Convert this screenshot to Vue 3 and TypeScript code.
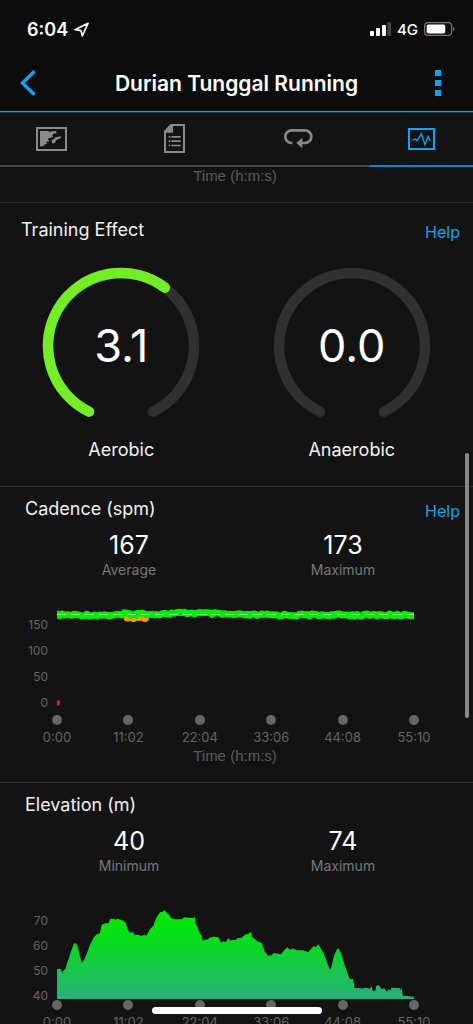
<script setup lang="ts">
interface Gauge {
  label: string
  value: number
}

interface Stat {
  value: number
  label: string
}

type Point = [number, number]

const GAUGE_MAX = 5
const GAUGE_SWEEP = 308
const gauges: Gauge[] = [
  { label: 'Aerobic', value: 3.1 },
  { label: 'Anaerobic', value: 0 },
]

const times: string[] = ['0:00', '11:02', '22:04', '33:06', '44:08', '55:10']

const cadenceStats: Stat[] = [
  { value: 167, label: 'Average' },
  { value: 173, label: 'Maximum' },
]
const elevationStats: Stat[] = [
  { value: 40, label: 'Minimum' },
  { value: 74, label: 'Maximum' },
]
const cadenceAxis: number[] = [150, 100, 50, 0]
const elevationAxis: number[] = [70, 60, 50, 40]

function arc(fraction: number): string {
  const r = 73
  const start = (360 - GAUGE_SWEEP) / 2
  const at = (deg: number): string => {
    const a = (deg * Math.PI) / 180
    return `${(79 - r * Math.sin(a)).toFixed(2)} ${(79 + r * Math.cos(a)).toFixed(2)}`
  }
  const sweep = GAUGE_SWEEP * fraction
  return `M${at(start)} A${r} ${r} 0 ${sweep > 180 ? 1 : 0} 1 ${at(start + sweep)}`
}

function noise(i: number): number {
  const v = Math.sin(i * 12.9898) * 43758.5453
  return (v - Math.floor(v)) * 2 - 1
}

const cadencePoints: Point[] = Array.from({ length: 144 }, (_, i): Point => {
  const x = i * 2.5
  const rise = 2 * Math.exp(-(((x - 132) / 34) ** 2))
  const dip = x > 66 && x < 94 ? 1 : 0
  return [x, 20 - rise + dip + 1.2 * noise(i)]
})

const elevationProfile: Point[] = [
  [171, 567], [182, 567], [187, 578], [191, 571], [196, 568], [200, 552], [207, 535], [212, 517],
  [221, 492], [227, 489], [233, 500], [240, 530], [246, 548], [252, 540], [260, 522], [270, 494],
  [282, 472], [291, 462], [300, 460], [305, 434], [316, 430], [326, 430], [330, 417], [342, 416],
  [347, 420], [350, 416], [358, 418], [366, 421], [376, 426], [383, 448], [390, 458], [400, 457],
  [404, 466], [415, 464], [424, 468], [433, 464], [440, 467], [448, 450], [460, 437], [468, 415],
  [480, 397], [488, 395], [494, 391], [500, 398], [507, 404], [514, 415], [524, 418], [545, 418],
  [553, 412], [565, 413], [582, 414], [584, 408], [586, 428], [593, 443], [600, 462], [605, 466],
  [609, 484], [616, 478], [621, 480], [628, 473], [640, 470], [655, 472], [664, 488], [670, 484],
  [678, 486], [685, 474], [692, 482], [700, 479], [707, 480], [713, 474], [724, 474], [735, 464],
  [744, 462], [754, 455], [756, 470], [765, 478], [774, 485], [785, 488], [794, 514], [804, 527],
  [814, 526], [821, 519], [844, 523], [851, 512], [862, 502], [871, 510], [879, 505], [889, 511],
  [909, 511], [924, 517], [936, 503], [942, 499], [947, 502], [955, 493], [964, 508], [972, 522],
  [982, 549], [990, 569], [994, 563], [1001, 530], [1011, 508], [1016, 505], [1023, 520],
  [1034, 555], [1048, 595], [1053, 598], [1059, 596], [1064, 625], [1079, 623], [1084, 626],
  [1099, 623], [1109, 626], [1115, 619], [1118, 632], [1126, 632], [1129, 617], [1137, 615],
  [1144, 627], [1154, 625], [1159, 635], [1167, 628], [1171, 632], [1174, 623], [1199, 624],
  [1202, 630], [1204, 621], [1209, 648], [1219, 647], [1236, 650], [1239, 648], [1242, 655],
]
const elevationPath = `M171 657 ${elevationProfile.map(([x, y]) => `L${x} ${y}`).join(' ')} L1242 657 Z`
</script>

<template>
  <div class="screen">
    <div class="status">
      <div class="status-left">
        <span class="clock">6:04</span>
        <svg class="locate" viewBox="0 0 45 45" aria-hidden="true">
          <path d="M42 4 3 23 21 26 25 42Z" fill="none" stroke="#fff" stroke-width="5" stroke-linejoin="round" />
        </svg>
      </div>
      <div class="status-right">
        <svg class="signal" viewBox="0 0 21 14" aria-hidden="true">
          <rect x="0" y="9" width="4" height="5" rx="1" fill="#fff" />
          <rect x="6" y="6" width="4" height="8" rx="1" fill="#fff" />
          <rect x="12" y="3" width="4" height="11" rx="1" fill="#fff" />
          <rect x="17.5" y="0" width="3.5" height="14" rx="1" fill="#444" />
        </svg>
        <span class="network">4G</span>
        <svg class="battery" viewBox="0 0 31 14" aria-hidden="true">
          <rect x="0.6" y="0.6" width="27" height="12.8" rx="3.5" fill="none" stroke="#777" stroke-width="1.2" />
          <rect x="2.6" y="2.4" width="18.6" height="9.2" rx="1.8" fill="#fff" />
          <path d="M29 4.8Q30.6 5.5 30.6 7T29 9.2Z" fill="#777" />
        </svg>
      </div>
    </div>

    <header class="header">
      <button class="icon-button" type="button" aria-label="Back">
        <svg class="back" viewBox="0 0 16 26"><path d="M14.5 1.2 2.4 13 14.5 24.8" fill="none" stroke="#11a4ec" stroke-width="3.4" /></svg>
      </button>
      <h1>Durian Tunggal Running</h1>
      <button class="icon-button end" type="button" aria-label="More">
        <svg class="more" viewBox="0 0 6 26"><path d="M0 0H6V6H0ZM0 10H6V16H0ZM0 20H6V26H0Z" fill="#11a4ec" /></svg>
      </button>
    </header>

    <nav class="tabs">
      <button class="tab" type="button" aria-label="Map">
        <svg class="icon-map" viewBox="0 0 93 72">
          <rect x="3" y="3" width="87" height="66" fill="none" stroke="#8a8a8a" stroke-width="6" />
          <path d="M12 12H36L40 15 48 13 60 12 62 19 52 20 49 25 52 29 44 32 38 33 36 38 41 43 30 45 34 51 26 52 22 58H12ZM48 47 47 40 54 37 58 31 66 29 74 28 75 33 66 37 60 40 58 46 52 50Z" fill="#8a8a8a" />
        </svg>
      </button>
      <button class="tab" type="button" aria-label="Summary">
        <svg class="icon-doc" viewBox="0 0 63 87">
          <path d="M3 22 21 3H60V84H3Z" fill="none" stroke="#8a8a8a" stroke-width="6" />
          <path d="M2 23 22 2H27V26H2Z" fill="#8a8a8a" />
          <path d="M14 36h5v5h-5zM22 36h28v5H22zM14 49h5v5h-5zM22 49h28v5H22zM14 62h5v5h-5zM22 62h28v5H22z" fill="#8a8a8a" />
        </svg>
      </button>
      <button class="tab" type="button" aria-label="Laps">
        <svg class="icon-laps" viewBox="0 0 87 60">
          <path d="M25 42H23A19 19 0 0 1 23 4H63A19 19 0 0 1 63 42H50" fill="none" stroke="#8a8a8a" stroke-width="8" />
          <path d="M37 42 55 26V58Z" fill="#8a8a8a" />
        </svg>
      </button>
      <button class="tab active" type="button" aria-label="Charts">
        <svg class="icon-chart" viewBox="0 0 81 66">
          <rect x="3" y="3" width="75" height="60" fill="none" stroke="#11a4ec" stroke-width="6" />
          <path d="M13 37 21 33 28 38 40 17 51 50 60 25 67 39" fill="none" stroke="#11a4ec" stroke-width="4" />
        </svg>
      </button>
    </nav>

    <main class="content">
      <p class="axis-title first">Time (h:m:s)</p>

      <section class="card training">
        <div class="card-head">
          <h2>Training Effect</h2>
          <a href="#training-help">Help</a>
        </div>
        <div class="gauges">
          <div v-for="g in gauges" :key="g.label" class="gauge">
            <div class="dial">
              <svg viewBox="0 0 158 158" aria-hidden="true">
                <path :d="arc(1)" class="track" />
                <path v-if="g.value > 0" :d="arc(g.value / GAUGE_MAX)" class="progress" />
              </svg>
              <span class="reading">{{ g.value.toFixed(1) }}</span>
            </div>
            <span class="gauge-label">{{ g.label }}</span>
          </div>
        </div>
      </section>

      <section class="card">
        <div class="card-head">
          <h2>Cadence (spm)</h2>
          <a href="#cadence-help">Help</a>
        </div>
        <div class="stats">
          <div v-for="s in cadenceStats" :key="s.label" class="stat">
            <strong>{{ s.value }}</strong>
            <span>{{ s.label }}</span>
          </div>
        </div>
        <div class="chart">
          <div class="y-axis cadence-axis">
            <span v-for="v in cadenceAxis" :key="v">{{ v }}</span>
          </div>
          <svg class="plot cadence-plot" viewBox="0 0 357 120" preserveAspectRatio="none" aria-hidden="true">
            <g fill="#ff9c0a">
              <circle cx="52" cy="20.8" r="3.8" />
              <circle cx="70.5" cy="22.5" r="4" />
              <circle cx="76.5" cy="23" r="4" />
              <circle cx="82" cy="22" r="4" />
              <circle cx="88" cy="23" r="4" />
            </g>
            <g fill="#00ec00">
              <circle v-for="([x, y], i) in cadencePoints" :key="i" :cx="x" :cy="x > 66 && x < 94 ? y - 2 : y" r="3.4" />
              <circle cx="73" cy="22" r="2" />
              <circle cx="79.5" cy="22" r="2" />
            </g>
            <path d="M0 19.5H357" stroke="#8cff8c" stroke-width="1" stroke-dasharray="9 5" />
            <circle cx="0" cy="108" r="3" fill="#ff0a3c" />
          </svg>
          <div class="x-axis">
            <span v-for="t in times" :key="t" class="tick"><i></i>{{ t }}</span>
          </div>
        </div>
        <p class="axis-title">Time (h:m:s)</p>
      </section>

      <section class="card">
        <div class="card-head">
          <h2>Elevation (m)</h2>
        </div>
        <div class="stats">
          <div v-for="s in elevationStats" :key="s.label" class="stat">
            <strong>{{ s.value }}</strong>
            <span>{{ s.label }}</span>
          </div>
        </div>
        <div class="chart">
          <div class="y-axis elevation-axis">
            <span v-for="v in elevationAxis" :key="v">{{ v }}</span>
          </div>
          <svg class="plot elevation-plot" viewBox="171 333 1071 327" preserveAspectRatio="none" aria-hidden="true">
            <defs>
              <linearGradient id="climb" gradientUnits="userSpaceOnUse" x1="0" y1="391" x2="0" y2="657">
                <stop offset="0" stop-color="#00ea00" />
                <stop offset="0.3" stop-color="#06de18" />
                <stop offset="1" stop-color="#26b278" />
              </linearGradient>
            </defs>
            <path :d="elevationPath" fill="url(#climb)" />
          </svg>
          <div class="x-axis">
            <span v-for="t in times" :key="t" class="tick"><i></i>{{ t }}</span>
          </div>
        </div>
        <p class="axis-title">Time (h:m:s)</p>
      </section>
    </main>

    <div class="scroll-thumb"></div>
    <div class="home-bar"></div>
  </div>
</template>

<style>
body {
  background: #131313;
}
</style>

<style scoped>
.screen {
  position: relative;
  display: flex;
  flex-direction: column;
  height: 100vh;
  overflow: hidden;
  background: #131313;
  color: #fff;
  font-family: Inter, "Liberation Sans", sans-serif;
}

.status {
  display: flex;
  flex: none;
  align-items: center;
  justify-content: space-between;
  height: 56px;
  padding: 2px 18px 0 27px;
  box-sizing: border-box;
  background: #0c0c0c;
}

.status-left,
.status-right {
  display: flex;
  align-items: center;
  gap: 6px;
}

.clock {
  font-size: 18px;
  font-weight: 600;
}

.locate {
  width: 15px;
  height: 15px;
}

.signal {
  width: 21px;
  height: 14px;
}

.network {
  font-size: 15px;
  font-weight: 500;
}

.battery {
  width: 31px;
  height: 14px;
}

.header {
  display: grid;
  flex: none;
  grid-template-columns: 40px 1fr 40px;
  align-items: center;
  height: 56px;
  padding: 0 16px 1px;
  box-sizing: border-box;
  background: #0c0c0c;
  border-bottom: 1px solid #11a4ec;
}

h1 {
  margin: 0;
  font-size: 21px;
  font-weight: 600;
  text-align: center;
  white-space: nowrap;
}

button {
  padding: 0;
  border: 0;
  background: none;
}

.icon-button {
  display: flex;
  align-items: center;
  height: 40px;
  padding: 0 4px;
}

.end {
  justify-content: flex-end;
  padding: 0 16px;
}

.back {
  width: 16px;
  height: 26px;
}

.more {
  width: 6px;
  height: 26px;
}

.tabs {
  display: grid;
  flex: none;
  grid-template-columns: repeat(4, 1fr);
  gap: 20px;
  height: 55px;
  box-sizing: border-box;
  border-top: 1px solid #0e4058;
  border-bottom: 2px solid #484848;
}

.tab {
  display: flex;
  align-items: center;
  justify-content: center;
  margin-bottom: -2px;
  padding-bottom: 3px;
}

.active {
  box-sizing: border-box;
  border-bottom: 2px solid #1685bd;
  padding-bottom: 1px;
}

.icon-map {
  width: 31px;
  height: 24px;
}

.icon-doc {
  width: 21px;
  height: 29px;
}

.icon-laps {
  width: 29px;
  height: 20px;
}

.icon-chart {
  width: 27px;
  height: 22px;
}

.content {
  flex: 1;
  min-height: 0;
  overflow-y: auto;
  scrollbar-width: none;
}

.axis-title {
  margin: 0 3px 0 0;
  color: #5c5c5c;
  font-family: "Liberation Sans", Arial, sans-serif;
  font-size: 15px;
  line-height: 18px;
  text-align: center;
}

.first {
  padding-bottom: 17px;
}

.card {
  padding: 10px 0 17px;
  border-top: 1px solid #2e2e2e;
}

.training {
  padding: 15px 0 25px;
}

.card-head {
  display: flex;
  align-items: flex-start;
  justify-content: space-between;
  height: 28px;
  padding: 0 13px 0 25px;
}

.training .card-head {
  padding-left: 21px;
}

h2 {
  margin: 0;
  color: #f2f2f2;
  font-size: 18px;
  font-weight: 400;
  line-height: 24px;
}

a {
  color: #11a4ec;
  font-size: 16px;
  line-height: 28px;
  text-decoration: none;
}

.gauges {
  display: grid;
  grid-template-columns: 1fr 1fr;
  margin-top: 21px;
  padding: 0 6px;
}

.gauge {
  display: flex;
  flex-direction: column;
  align-items: center;
  gap: 14px;
}

.dial {
  display: grid;
  place-items: center;
  width: 158px;
  height: 158px;
}

.dial > * {
  grid-area: 1 / 1;
}

.track,
.progress {
  fill: none;
  stroke-width: 10.5;
  stroke-linecap: round;
}

.track {
  stroke: #303030;
}

.progress {
  stroke: #73ee24;
}

.reading {
  font-size: 45px;
  line-height: 44px;
}

.gauge-label {
  color: #f2f2f2;
  font-size: 18px;
  line-height: 22px;
}

.stats {
  display: grid;
  grid-template-columns: 1fr 1fr;
  margin-top: 5px;
  padding: 0 23px 0 22px;
}

.stat {
  display: flex;
  flex-direction: column;
  align-items: center;
}

.stat strong {
  font-size: 25px;
  font-weight: 400;
  line-height: 31px;
}

.stat span {
  color: #777;
  font-size: 14px;
  line-height: 18px;
}

.chart {
  display: grid;
  grid-template-columns: 48px 1fr;
  column-gap: 9px;
  margin-top: 16px;
  padding-right: 59px;
}

.y-axis {
  display: flex;
  flex-direction: column;
  grid-row: 1 / 3;
  padding-top: 23px;
  color: #666;
  font-size: 12px;
  line-height: 14px;
  text-align: right;
}

.cadence-axis {
  gap: 12px;
}

.elevation-axis {
  gap: 11px;
}

.plot {
  display: block;
  width: 100%;
}

.cadence-plot {
  height: 120px;
}

.elevation-plot {
  height: 109px;
}

.x-axis {
  display: flex;
  grid-column: 2;
  justify-content: space-between;
  margin: 0 -20px;
}

.tick {
  display: flex;
  flex-direction: column;
  align-items: center;
  gap: 4px;
  width: 40px;
  color: #666;
  font-size: 13px;
  line-height: 16px;
}

.tick i {
  width: 10px;
  height: 10px;
  border-radius: 50%;
  background: #666;
}

.chart + .axis-title {
  margin-top: 2px;
}

.scroll-thumb {
  position: absolute;
  top: 453px;
  right: 4px;
  width: 4px;
  height: 265px;
  border-radius: 2px;
  background: #888;
}

.home-bar {
  position: absolute;
  bottom: 10px;
  left: 50%;
  width: 170px;
  height: 7px;
  margin-left: -85px;
  border-radius: 4px;
  background: #fff;
}
</style>
